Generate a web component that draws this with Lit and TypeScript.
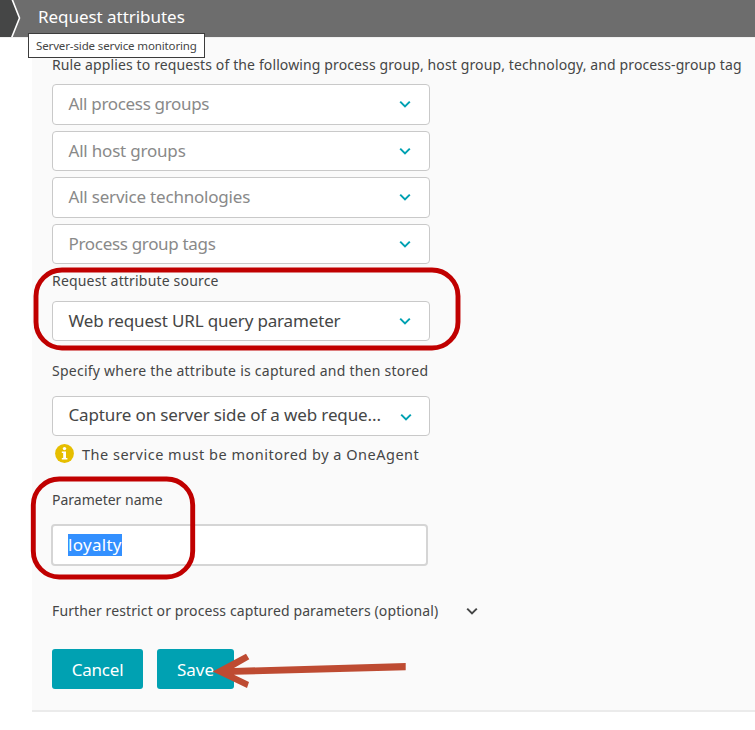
import { LitElement, html, css, svg } from "lit";
import { customElement, property } from "lit/decorators.js";

const chevron = svg`<path d="M1.2 1.6 L6 6.4 L10.8 1.6" fill="none" stroke="currentColor" stroke-width="2"/>`;

@customElement("select-box")
class SelectBox extends LitElement {
  @property() label = "";
  @property({ type: Boolean }) placeholder = false;
  static styles = css`
    :host {
      display: flex;
      align-items: center;
      justify-content: space-between;
      box-sizing: border-box;
      width: 378px;
      height: 40.5px;
      padding: 0 18.5px 0 15.5px;
      border: 1px solid #c9c9c9;
      border-radius: 4px;
      background: #fff;
      color: #454646;
      font-size: 17px;
      line-height: 24px;
      white-space: nowrap;
    }
    :host([placeholder]) { color: #898989; }
    :host(.technology) { padding-bottom: 1px; }
    :host(.where) { padding-right: 17.5px; }
    :host(.where) span { padding-bottom: 2px; }
    :host(.where) svg { margin-top: 2px; }
    svg { display: block; width: 12px; height: 8px; color: #00a1b2; }
  `;
  render() {
    return html`<span>${this.label}</span><svg viewBox="0 0 12 8">${chevron}</svg>`;
  }
}

@customElement("app-root")
class AppRoot extends LitElement {
  static styles = css`
    :host {
      display: block;
      position: relative;
      width: 755px;
      height: 730px;
      overflow: hidden;
      background: #fff;
      color: #454646;
      font-family: "Noto Sans", sans-serif;
    }
    header {
      display: flex;
      height: 37px;
      background: #6d6d6d;
      color: #fff;
      border-bottom: 1px solid #f0f0f0;
    }
    .crumb { width: 22px; height: 37px; margin-right: 16px; }
    h1 { margin: 0; font-size: 17px; font-weight: 400; line-height: 34px; letter-spacing: -0.04px; }
    main {
      box-sizing: border-box;
      margin-left: 32px;
      height: 674px;
      padding: 17px 0 0 20px;
      background: #fafafa;
      border-bottom: 2px solid #ebebeb;
    }
    .label { font-size: 14px; line-height: 20px; white-space: nowrap; }
    .rule { margin-bottom: 9px; letter-spacing: 0.12px; }
    .filters { display: grid; gap: 6.17px; }
    .process, .tags { letter-spacing: -0.32px; }
    .host, .technology { letter-spacing: -0.2px; }
    .query { letter-spacing: -0.16px; }
    .where { letter-spacing: -0.13px; }
    .source { margin: 6.5px 0 10px; letter-spacing: 0.18px; }
    .capture { margin: 19.5px 0 15px; letter-spacing: 0.25px; }
    .note { display: flex; align-items: center; margin: 9px 0 25px 3px; height: 20px; }
    .note svg { width: 19px; height: 19px; margin: 0 8px 3px 0; }
    .note span { font-size: 14.5px; letter-spacing: 0.5px; padding-bottom: 2px; }
    .field {
      display: flex;
      align-items: center;
      box-sizing: border-box;
      width: 377px;
      height: 42px;
      margin: 14px 0 35px -1px;
      padding-left: 15px;
      border: 2px solid #d5d5d5;
      border-radius: 4px;
      background: #fff;
    }
    .selected {
      width: 54px;
      height: 22px;
      background: #3390ff;
      color: #fff;
      font-size: 17px;
      line-height: 22px;
      letter-spacing: 0.3px;
      white-space: nowrap;
    }
    .more { display: flex; align-items: center; letter-spacing: 0.11px; }
    .more svg { width: 12px; height: 8px; margin-left: 28px; }
    .buttons { display: flex; gap: 14px; margin-top: 28px; }
    button {
      height: 40px;
      padding: 1px 0 0;
      border: 0;
      border-radius: 3px;
      background: #00a1b2;
      color: #fff;
      font: 17px/39px "Noto Sans", sans-serif;
    }
    .cancel { width: 91px; letter-spacing: -0.2px; }
    .save { width: 77px; }
    .tooltip {
      position: absolute;
      left: 28px;
      top: 33px;
      box-sizing: border-box;
      width: 177px;
      height: 25px;
      border: 1px solid #3c3c3c;
      background: #fff;
      padding-left: 7px;
      font-size: 11.5px;
      line-height: 23px;
      letter-spacing: -0.13px;
      white-space: nowrap;
    }
    .marks { position: absolute; left: 0; top: 0; width: 755px; height: 730px; pointer-events: none; }
  `;
  render() {
    return html`
      <header>
        <svg class="crumb" viewBox="0 0 22 37">
          <path d="M0 0H12L19.5 18L12 37H0Z" fill="#454646" />
          <path d="M12 -1L19.5 18L11.5 38" fill="none" stroke="#fff" stroke-width="1.6" />
        </svg>
        <h1>Request attributes</h1>
      </header>
      <main>
        <div class="label rule">Rule applies to requests of the following process group, host group, technology, and process-group tag</div>
        <div class="filters">
          <select-box class="process" placeholder label="All process groups"></select-box>
          <select-box class="host" placeholder label="All host groups"></select-box>
          <select-box class="technology" placeholder label="All service technologies"></select-box>
          <select-box class="tags" placeholder label="Process group tags"></select-box>
        </div>
        <div class="label source">Request attribute source</div>
        <select-box class="query" label="Web request URL query parameter"></select-box>
        <div class="label capture">Specify where the attribute is captured and then stored</div>
        <select-box class="where" label="Capture on server side of a web reque..."></select-box>
        <div class="label note">
          <svg viewBox="0 0 19 19">
            <circle cx="9.5" cy="9.5" r="9.4" fill="#e6be00" />
            <circle cx="9.5" cy="4.6" r="1.7" fill="#fff" />
            <path d="M6.8 7.5H11V14H12.4V15.5H6.8V14H8.2V9H6.8Z" fill="#fff" />
          </svg>
          <span>The service must be monitored by a OneAgent</span>
        </div>
        <div class="label param">Parameter name</div>
        <div class="field"><span class="selected">loyalty</span></div>
        <div class="label more"><span>Further restrict or process captured parameters (optional)</span><svg viewBox="0 0 12 8">${chevron}</svg></div>
        <div class="buttons"><button class="cancel">Cancel</button><button class="save">Save</button></div>
      </main>
      <div class="tooltip">Server-side service monitoring</div>
      <svg class="marks" viewBox="0 0 755 730">
        <g fill="none" stroke="#c00000" stroke-width="4.9">
          <rect x="36" y="270" width="422" height="78" rx="26" />
          <rect x="33.3" y="479" width="159.4" height="98" rx="26" />
        </g>
        <path d="M212.7 671.6L246 653.7L249.3 659.3L234 668L405.7 663V670.3L234 674.7L249 682L247 688Z" fill="#be4b32" />
      </svg>
    `;
  }
}
